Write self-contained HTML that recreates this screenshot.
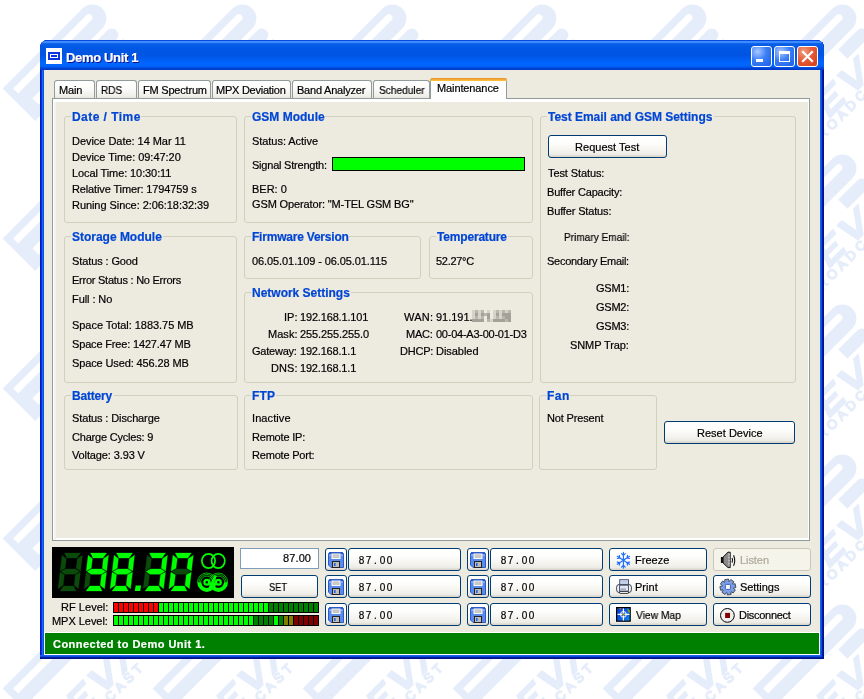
<!DOCTYPE html><html><head><meta charset="utf-8"><style>
html,body{margin:0;padding:0;}
body{width:864px;height:699px;position:relative;overflow:hidden;background:#fff;font-family:"Liberation Sans",sans-serif;}
.a,.t{position:absolute;}
.t{white-space:nowrap;line-height:20px;will-change:transform;-webkit-text-stroke:0.2px currentColor;}
.grp{position:absolute;border:1px solid #D0D0BF;border-radius:3px;box-sizing:border-box;}
.btn{position:absolute;box-sizing:border-box;border:1px solid #003C74;border-radius:3px;background:linear-gradient(180deg,#fff 0%,#fefefd 30%,#f4f3ee 70%,#ecebe6 88%,#d6d0c5 100%);}
.tab{position:absolute;box-sizing:border-box;border:1px solid #919B9C;border-bottom:none;border-radius:3px 3px 0 0;background:linear-gradient(180deg,#fff 0%,#fcfcfb 40%,#f0efea 85%,#e8e7e0 100%);}
svg{position:absolute;overflow:visible;}
</style></head><body>
<svg style="left:0;top:0" width="864" height="699"><defs><pattern id="wmp" x="0" y="0" width="150" height="150" patternUnits="userSpaceOnUse"><g transform="translate(-150,-150)"><g transform="translate(2.6,88.5) rotate(-45)" fill="#E6EDFA"><path fill-rule="evenodd" d="M0,0 H113 A14,14 0 0 1 113,28 H14 V37 H22 V46 H0 Z M7.5,7.5 V14.5 H14 V14.5 H111 A3.5,3.5 0 0 0 111,7.5 Z"/><rect x="7.5" y="27.5" width="6.5" height="9.5" /><path d="M88,33 H115 A6.5,6.5 0 0 1 115,46 H88 Z"/><g transform="translate(40,50) skewX(-15)"><rect x="0" y="0" width="24" height="6"/><rect x="0" y="10" width="20" height="5.5"/><rect x="0" y="20" width="24" height="6"/><rect x="0" y="0" width="6" height="26"/></g><g transform="translate(68,50) skewX(-15)"><path d="M0,0 h8 l8,18 l8,-18 h8 l-12,26 h-8 z"/></g><g transform="translate(100,50) skewX(-15)"><path d="M0,26 l12,-26 h8 l12,26 h-8 l-8,-18 l-8,18 z"/></g><text x="0" y="86" font-family="Liberation Sans" font-size="13" letter-spacing="4" fill="none" stroke="#E6EDFA" stroke-width="1.5">BROADCAST</text></g></g><g transform="translate(-150,0)"><g transform="translate(2.6,88.5) rotate(-45)" fill="#E6EDFA"><path fill-rule="evenodd" d="M0,0 H113 A14,14 0 0 1 113,28 H14 V37 H22 V46 H0 Z M7.5,7.5 V14.5 H14 V14.5 H111 A3.5,3.5 0 0 0 111,7.5 Z"/><rect x="7.5" y="27.5" width="6.5" height="9.5" /><path d="M88,33 H115 A6.5,6.5 0 0 1 115,46 H88 Z"/><g transform="translate(40,50) skewX(-15)"><rect x="0" y="0" width="24" height="6"/><rect x="0" y="10" width="20" height="5.5"/><rect x="0" y="20" width="24" height="6"/><rect x="0" y="0" width="6" height="26"/></g><g transform="translate(68,50) skewX(-15)"><path d="M0,0 h8 l8,18 l8,-18 h8 l-12,26 h-8 z"/></g><g transform="translate(100,50) skewX(-15)"><path d="M0,26 l12,-26 h8 l12,26 h-8 l-8,-18 l-8,18 z"/></g><text x="0" y="86" font-family="Liberation Sans" font-size="13" letter-spacing="4" fill="none" stroke="#E6EDFA" stroke-width="1.5">BROADCAST</text></g></g><g transform="translate(-150,150)"><g transform="translate(2.6,88.5) rotate(-45)" fill="#E6EDFA"><path fill-rule="evenodd" d="M0,0 H113 A14,14 0 0 1 113,28 H14 V37 H22 V46 H0 Z M7.5,7.5 V14.5 H14 V14.5 H111 A3.5,3.5 0 0 0 111,7.5 Z"/><rect x="7.5" y="27.5" width="6.5" height="9.5" /><path d="M88,33 H115 A6.5,6.5 0 0 1 115,46 H88 Z"/><g transform="translate(40,50) skewX(-15)"><rect x="0" y="0" width="24" height="6"/><rect x="0" y="10" width="20" height="5.5"/><rect x="0" y="20" width="24" height="6"/><rect x="0" y="0" width="6" height="26"/></g><g transform="translate(68,50) skewX(-15)"><path d="M0,0 h8 l8,18 l8,-18 h8 l-12,26 h-8 z"/></g><g transform="translate(100,50) skewX(-15)"><path d="M0,26 l12,-26 h8 l12,26 h-8 l-8,-18 l-8,18 z"/></g><text x="0" y="86" font-family="Liberation Sans" font-size="13" letter-spacing="4" fill="none" stroke="#E6EDFA" stroke-width="1.5">BROADCAST</text></g></g><g transform="translate(0,-150)"><g transform="translate(2.6,88.5) rotate(-45)" fill="#E6EDFA"><path fill-rule="evenodd" d="M0,0 H113 A14,14 0 0 1 113,28 H14 V37 H22 V46 H0 Z M7.5,7.5 V14.5 H14 V14.5 H111 A3.5,3.5 0 0 0 111,7.5 Z"/><rect x="7.5" y="27.5" width="6.5" height="9.5" /><path d="M88,33 H115 A6.5,6.5 0 0 1 115,46 H88 Z"/><g transform="translate(40,50) skewX(-15)"><rect x="0" y="0" width="24" height="6"/><rect x="0" y="10" width="20" height="5.5"/><rect x="0" y="20" width="24" height="6"/><rect x="0" y="0" width="6" height="26"/></g><g transform="translate(68,50) skewX(-15)"><path d="M0,0 h8 l8,18 l8,-18 h8 l-12,26 h-8 z"/></g><g transform="translate(100,50) skewX(-15)"><path d="M0,26 l12,-26 h8 l12,26 h-8 l-8,-18 l-8,18 z"/></g><text x="0" y="86" font-family="Liberation Sans" font-size="13" letter-spacing="4" fill="none" stroke="#E6EDFA" stroke-width="1.5">BROADCAST</text></g></g><g transform="translate(0,0)"><g transform="translate(2.6,88.5) rotate(-45)" fill="#E6EDFA"><path fill-rule="evenodd" d="M0,0 H113 A14,14 0 0 1 113,28 H14 V37 H22 V46 H0 Z M7.5,7.5 V14.5 H14 V14.5 H111 A3.5,3.5 0 0 0 111,7.5 Z"/><rect x="7.5" y="27.5" width="6.5" height="9.5" /><path d="M88,33 H115 A6.5,6.5 0 0 1 115,46 H88 Z"/><g transform="translate(40,50) skewX(-15)"><rect x="0" y="0" width="24" height="6"/><rect x="0" y="10" width="20" height="5.5"/><rect x="0" y="20" width="24" height="6"/><rect x="0" y="0" width="6" height="26"/></g><g transform="translate(68,50) skewX(-15)"><path d="M0,0 h8 l8,18 l8,-18 h8 l-12,26 h-8 z"/></g><g transform="translate(100,50) skewX(-15)"><path d="M0,26 l12,-26 h8 l12,26 h-8 l-8,-18 l-8,18 z"/></g><text x="0" y="86" font-family="Liberation Sans" font-size="13" letter-spacing="4" fill="none" stroke="#E6EDFA" stroke-width="1.5">BROADCAST</text></g></g><g transform="translate(0,150)"><g transform="translate(2.6,88.5) rotate(-45)" fill="#E6EDFA"><path fill-rule="evenodd" d="M0,0 H113 A14,14 0 0 1 113,28 H14 V37 H22 V46 H0 Z M7.5,7.5 V14.5 H14 V14.5 H111 A3.5,3.5 0 0 0 111,7.5 Z"/><rect x="7.5" y="27.5" width="6.5" height="9.5" /><path d="M88,33 H115 A6.5,6.5 0 0 1 115,46 H88 Z"/><g transform="translate(40,50) skewX(-15)"><rect x="0" y="0" width="24" height="6"/><rect x="0" y="10" width="20" height="5.5"/><rect x="0" y="20" width="24" height="6"/><rect x="0" y="0" width="6" height="26"/></g><g transform="translate(68,50) skewX(-15)"><path d="M0,0 h8 l8,18 l8,-18 h8 l-12,26 h-8 z"/></g><g transform="translate(100,50) skewX(-15)"><path d="M0,26 l12,-26 h8 l12,26 h-8 l-8,-18 l-8,18 z"/></g><text x="0" y="86" font-family="Liberation Sans" font-size="13" letter-spacing="4" fill="none" stroke="#E6EDFA" stroke-width="1.5">BROADCAST</text></g></g><g transform="translate(150,-150)"><g transform="translate(2.6,88.5) rotate(-45)" fill="#E6EDFA"><path fill-rule="evenodd" d="M0,0 H113 A14,14 0 0 1 113,28 H14 V37 H22 V46 H0 Z M7.5,7.5 V14.5 H14 V14.5 H111 A3.5,3.5 0 0 0 111,7.5 Z"/><rect x="7.5" y="27.5" width="6.5" height="9.5" /><path d="M88,33 H115 A6.5,6.5 0 0 1 115,46 H88 Z"/><g transform="translate(40,50) skewX(-15)"><rect x="0" y="0" width="24" height="6"/><rect x="0" y="10" width="20" height="5.5"/><rect x="0" y="20" width="24" height="6"/><rect x="0" y="0" width="6" height="26"/></g><g transform="translate(68,50) skewX(-15)"><path d="M0,0 h8 l8,18 l8,-18 h8 l-12,26 h-8 z"/></g><g transform="translate(100,50) skewX(-15)"><path d="M0,26 l12,-26 h8 l12,26 h-8 l-8,-18 l-8,18 z"/></g><text x="0" y="86" font-family="Liberation Sans" font-size="13" letter-spacing="4" fill="none" stroke="#E6EDFA" stroke-width="1.5">BROADCAST</text></g></g><g transform="translate(150,0)"><g transform="translate(2.6,88.5) rotate(-45)" fill="#E6EDFA"><path fill-rule="evenodd" d="M0,0 H113 A14,14 0 0 1 113,28 H14 V37 H22 V46 H0 Z M7.5,7.5 V14.5 H14 V14.5 H111 A3.5,3.5 0 0 0 111,7.5 Z"/><rect x="7.5" y="27.5" width="6.5" height="9.5" /><path d="M88,33 H115 A6.5,6.5 0 0 1 115,46 H88 Z"/><g transform="translate(40,50) skewX(-15)"><rect x="0" y="0" width="24" height="6"/><rect x="0" y="10" width="20" height="5.5"/><rect x="0" y="20" width="24" height="6"/><rect x="0" y="0" width="6" height="26"/></g><g transform="translate(68,50) skewX(-15)"><path d="M0,0 h8 l8,18 l8,-18 h8 l-12,26 h-8 z"/></g><g transform="translate(100,50) skewX(-15)"><path d="M0,26 l12,-26 h8 l12,26 h-8 l-8,-18 l-8,18 z"/></g><text x="0" y="86" font-family="Liberation Sans" font-size="13" letter-spacing="4" fill="none" stroke="#E6EDFA" stroke-width="1.5">BROADCAST</text></g></g><g transform="translate(150,150)"><g transform="translate(2.6,88.5) rotate(-45)" fill="#E6EDFA"><path fill-rule="evenodd" d="M0,0 H113 A14,14 0 0 1 113,28 H14 V37 H22 V46 H0 Z M7.5,7.5 V14.5 H14 V14.5 H111 A3.5,3.5 0 0 0 111,7.5 Z"/><rect x="7.5" y="27.5" width="6.5" height="9.5" /><path d="M88,33 H115 A6.5,6.5 0 0 1 115,46 H88 Z"/><g transform="translate(40,50) skewX(-15)"><rect x="0" y="0" width="24" height="6"/><rect x="0" y="10" width="20" height="5.5"/><rect x="0" y="20" width="24" height="6"/><rect x="0" y="0" width="6" height="26"/></g><g transform="translate(68,50) skewX(-15)"><path d="M0,0 h8 l8,18 l8,-18 h8 l-12,26 h-8 z"/></g><g transform="translate(100,50) skewX(-15)"><path d="M0,26 l12,-26 h8 l12,26 h-8 l-8,-18 l-8,18 z"/></g><text x="0" y="86" font-family="Liberation Sans" font-size="13" letter-spacing="4" fill="none" stroke="#E6EDFA" stroke-width="1.5">BROADCAST</text></g></g></pattern></defs><rect x="0" y="0" width="864" height="699" fill="url(#wmp)"/></svg>
<div class="a" style="left:40px;top:40px;width:784px;height:619px;background:#0855dd;border-radius:8px 8px 0 0;box-shadow:inset -1px -1px #00138c, inset -2px -2px #001ea0, inset -3px -3px #0b4be0, inset -4px -4px #1664ec, inset 1px 1px #0019cf, inset 2px 2px #0831d9, inset 3px 3px #166aee;"></div>
<div class="a" style="left:40px;top:40px;width:784px;height:30px;border-radius:8px 8px 0 0;background:linear-gradient(180deg,#0b4adf 0px,#0b4adf 1px,#3a8cff 1px,#3a8cff 3px,#1468f2 3px,#0a5ee8 4px,#0058e4 8px,#0054e2 15px,#005cf0 19px,#0066ff 23px,#0064fc 26px,#0058ee 27px,#0048d8 28px,#0036c6 30px);"></div>
<div class="a" style="left:44px;top:70px;width:776px;height:585px;background:#EDEAE0;"></div>
<div class="a" style="left:46px;top:48px;width:16px;height:16px;background:#fff;"></div>
<div class="a" style="left:48px;top:52px;width:12px;height:8px;background:#0a36e0;"></div>
<div class="a" style="left:50px;top:54px;width:8px;height:4px;background:#fff;"></div>
<div class="a" style="left:51px;top:55px;width:6px;height:2px;background:#0a36e0;"></div>
<div class="t" style="left:65.50px;top:47.50px;font-size:13px;color:#fff;font-weight:bold;letter-spacing:-0.335px;text-shadow:1px 1px #0f1089;">Demo Unit 1</div>
<div class="a" style="left:751px;top:46px;width:21px;height:21px;box-sizing:border-box;border:1px solid #fff;border-radius:3px;background:radial-gradient(circle at 30% 25%,#a9c8ff 0%,#3b7ff5 45%,#1c5ee8 100%);"></div>
<div class="a" style="left:774px;top:46px;width:21px;height:21px;box-sizing:border-box;border:1px solid #fff;border-radius:3px;background:radial-gradient(circle at 30% 25%,#a9c8ff 0%,#3b7ff5 45%,#1c5ee8 100%);"></div>
<div class="a" style="left:797px;top:46px;width:21px;height:21px;box-sizing:border-box;border:1px solid #fff;border-radius:3px;background:radial-gradient(circle at 30% 25%,#f0a080 0%,#e65b3a 45%,#d13c15 100%);"></div>
<div class="a" style="left:756px;top:59px;width:7px;height:3px;background:#fff;"></div>
<div class="a" style="left:779px;top:51px;width:11px;height:11px;box-sizing:border-box;border:1px solid #fff;border-top-width:3px;"></div>
<svg style="left:797px;top:46px" width="21" height="21"><path d="M6,6 L15,15 M15,6 L6,15" stroke="#fff" stroke-width="2.2" stroke-linecap="square"/></svg>
<div class="tab" style="left:54px;top:80px;width:41px;height:18px;"></div>
<div class="t" style="left:58.60px;top:80.19px;font-size:11px;color:#000;letter-spacing:-0.183px;">Main</div>
<div class="tab" style="left:96px;top:80px;width:41px;height:18px;"></div>
<div class="t" style="left:100.59px;top:80.19px;font-size:11px;color:#000;transform:scaleX(0.9057);transform-origin:0 0;">RDS</div>
<div class="tab" style="left:138px;top:80px;width:73px;height:18px;"></div>
<div class="t" style="left:142.50px;top:80.19px;font-size:11px;color:#000;letter-spacing:-0.205px;">FM Spectrum</div>
<div class="tab" style="left:212px;top:80px;width:79px;height:18px;"></div>
<div class="t" style="left:216.30px;top:80.19px;font-size:11px;color:#000;letter-spacing:-0.250px;">MPX Deviation</div>
<div class="tab" style="left:292px;top:80px;width:80px;height:18px;"></div>
<div class="t" style="left:297.00px;top:80.19px;font-size:11px;color:#000;letter-spacing:-0.217px;">Band Analyzer</div>
<div class="tab" style="left:373px;top:80px;width:57px;height:18px;"></div>
<div class="t" style="left:378.74px;top:80.19px;font-size:11px;color:#000;transform:scaleX(0.9224);transform-origin:0 0;">Scheduler</div>
<div class="a" style="left:52px;top:98px;width:758px;height:443px;box-sizing:border-box;border:1px solid #919B9C;background:#EDEAE0;box-shadow:inset 1px 3px #fff, inset 3px 0px #f4f3f0, inset -1px -2px #fff;"></div>
<div class="a" style="left:430px;top:78px;width:77px;height:21px;box-sizing:border-box;border:1px solid #919B9C;border-bottom:none;border-radius:3px 3px 0 0;background:#fff;"></div>
<div class="a" style="left:430px;top:78px;width:77px;height:3px;border-radius:3px 3px 0 0;background:linear-gradient(180deg,#e68b2c,#ffc73c);"></div>
<div class="t" style="left:436.70px;top:78.19px;font-size:11px;color:#000;letter-spacing:-0.110px;">Maintenance</div>
<div class="grp" style="left:64px;top:116px;width:173px;height:107px;"></div>
<div class="a" style="left:71.2px;top:114px;width:70.3px;height:5px;background:#EDEAE0;"></div>
<div class="t" style="left:71.95px;top:106.84px;font-size:12px;color:#0046D5;font-weight:bold;letter-spacing:0.455px;">Date / Time</div>
<div class="t" style="left:71.70px;top:131.19px;font-size:11px;color:#000;letter-spacing:-0.036px;">Device Date: 14 Mar 11</div>
<div class="t" style="left:71.70px;top:147.19px;font-size:11px;color:#000;letter-spacing:-0.033px;">Device Time: 09:47:20</div>
<div class="t" style="left:71.70px;top:163.19px;font-size:11px;color:#000;letter-spacing:-0.100px;">Local Time: 10:30:11</div>
<div class="t" style="left:71.70px;top:179.19px;font-size:11px;color:#000;letter-spacing:-0.129px;">Relative Timer: 1794759 s</div>
<div class="t" style="left:71.70px;top:195.19px;font-size:11px;color:#000;letter-spacing:-0.063px;">Runing Since: 2:06:18:32:39</div>
<div class="grp" style="left:244px;top:116px;width:289px;height:107px;"></div>
<div class="a" style="left:250.7px;top:114px;width:74.8px;height:5px;background:#EDEAE0;"></div>
<div class="t" style="left:251.70px;top:106.84px;font-size:12px;color:#0046D5;font-weight:bold;letter-spacing:0.006px;">GSM Module</div>
<div class="t" style="left:252.10px;top:131.19px;font-size:11px;color:#000;letter-spacing:-0.050px;">Status: Active</div>
<div class="t" style="left:252.10px;top:155.19px;font-size:11px;color:#000;letter-spacing:-0.217px;">Signal Strength:</div>
<div class="a" style="left:332px;top:157px;width:193px;height:14px;box-sizing:border-box;border:1px solid #000;background:#00ff00;"></div>
<div class="t" style="left:251.60px;top:179.19px;font-size:11px;color:#000;">BER: 0</div>
<div class="t" style="left:252.10px;top:194.19px;font-size:11px;color:#000;letter-spacing:-0.130px;">GSM Operator: "M-TEL GSM BG"</div>
<div class="grp" style="left:540px;top:116px;width:256px;height:267px;"></div>
<div class="a" style="left:546.8px;top:114px;width:167px;height:5px;background:#EDEAE0;"></div>
<div class="t" style="left:548.30px;top:106.84px;font-size:12px;color:#0046D5;font-weight:bold;letter-spacing:-0.029px;">Test Email and GSM Settings</div>
<div class="btn" style="left:548px;top:135px;width:119px;height:23px;"></div>
<div class="t" style="left:574.80px;top:137.19px;font-size:11px;color:#000;letter-spacing:0.032px;">Request Test</div>
<div class="t" style="left:547.65px;top:163.19px;font-size:11px;color:#000;letter-spacing:-0.095px;">Test Status:</div>
<div class="t" style="left:546.90px;top:182.19px;font-size:11px;color:#000;letter-spacing:-0.180px;">Buffer Capacity:</div>
<div class="t" style="left:546.90px;top:200.69px;font-size:11px;color:#000;letter-spacing:-0.154px;">Buffer Status:</div>
<div class="t" style="left:563.78px;top:226.69px;font-size:11px;color:#000;transform:scaleX(0.9165);transform-origin:0 0;">Primary Email:</div>
<div class="t" style="left:547.20px;top:250.69px;font-size:11px;color:#000;letter-spacing:-0.270px;">Secondary Email:</div>
<div class="t" style="left:596.10px;top:277.69px;font-size:11px;color:#000;letter-spacing:-0.237px;">GSM1:</div>
<div class="t" style="left:596.10px;top:296.69px;font-size:11px;color:#000;letter-spacing:-0.237px;">GSM2:</div>
<div class="t" style="left:596.10px;top:315.69px;font-size:11px;color:#000;letter-spacing:-0.237px;">GSM3:</div>
<div class="t" style="left:570.00px;top:334.69px;font-size:11px;color:#000;letter-spacing:-0.094px;">SNMP Trap:</div>
<div class="grp" style="left:64px;top:236px;width:173px;height:147px;"></div>
<div class="a" style="left:71.0px;top:234px;width:91.8px;height:5px;background:#EDEAE0;"></div>
<div class="t" style="left:72.00px;top:226.84px;font-size:12px;color:#0046D5;font-weight:bold;letter-spacing:-0.015px;">Storage Module</div>
<div class="t" style="left:72.00px;top:251.19px;font-size:11px;color:#000;letter-spacing:-0.108px;">Status : Good</div>
<div class="t" style="left:71.50px;top:270.19px;font-size:11px;color:#000;letter-spacing:-0.248px;">Error Status : No Errors</div>
<div class="t" style="left:71.50px;top:289.19px;font-size:11px;color:#000;letter-spacing:-0.075px;">Full : No</div>
<div class="t" style="left:72.00px;top:315.19px;font-size:11px;color:#000;letter-spacing:-0.048px;">Space Total: 1883.75 MB</div>
<div class="t" style="left:72.00px;top:334.19px;font-size:11px;color:#000;letter-spacing:-0.164px;">Space Free: 1427.47 MB</div>
<div class="t" style="left:72.00px;top:352.69px;font-size:11px;color:#000;letter-spacing:-0.123px;">Space Used: 456.28 MB</div>
<div class="grp" style="left:244px;top:236px;width:177px;height:43px;"></div>
<div class="a" style="left:251.2px;top:234px;width:98.3px;height:5px;background:#EDEAE0;"></div>
<div class="t" style="left:251.95px;top:226.84px;font-size:12px;color:#0046D5;font-weight:bold;letter-spacing:-0.213px;">Firmware Version</div>
<div class="t" style="left:252.20px;top:251.19px;font-size:11px;color:#000;letter-spacing:-0.085px;">06.05.01.109 - 06.05.01.115</div>
<div class="grp" style="left:429px;top:236px;width:104px;height:43px;"></div>
<div class="a" style="left:435.5px;top:234px;width:72.7px;height:5px;background:#EDEAE0;"></div>
<div class="t" style="left:437.00px;top:226.84px;font-size:12px;color:#0046D5;font-weight:bold;letter-spacing:-0.180px;">Temperature</div>
<div class="t" style="left:435.90px;top:251.19px;font-size:11px;color:#000;letter-spacing:-0.300px;">52.27°C</div>
<div class="grp" style="left:244px;top:292px;width:289px;height:91px;"></div>
<div class="a" style="left:251.3px;top:290px;width:99.6px;height:5px;background:#EDEAE0;"></div>
<div class="t" style="left:252.05px;top:282.84px;font-size:12px;color:#0046D5;font-weight:bold;letter-spacing:-0.010px;">Network Settings</div>
<div class="t" style="left:283.60px;top:307.19px;font-size:11px;color:#000;letter-spacing:0.050px;">IP:</div>
<div class="t" style="left:300.15px;top:307.19px;font-size:11px;color:#000;letter-spacing:-0.167px;">192.168.1.101</div>
<div class="t" style="left:267.80px;top:323.69px;font-size:11px;color:#000;letter-spacing:0.037px;">Mask:</div>
<div class="t" style="left:300.40px;top:323.69px;font-size:11px;color:#000;letter-spacing:-0.108px;">255.255.255.0</div>
<div class="t" style="left:252.30px;top:340.69px;font-size:11px;color:#000;letter-spacing:-0.229px;">Gateway:</div>
<div class="t" style="left:300.15px;top:340.69px;font-size:11px;color:#000;letter-spacing:-0.185px;">192.168.1.1</div>
<div class="t" style="left:270.60px;top:357.69px;font-size:11px;color:#000;letter-spacing:0.117px;">DNS:</div>
<div class="t" style="left:300.15px;top:357.69px;font-size:11px;color:#000;letter-spacing:-0.185px;">192.168.1.1</div>
<div class="t" style="left:404.20px;top:307.19px;font-size:11px;color:#000;letter-spacing:0.250px;">WAN:</div>
<div class="t" style="left:436.00px;top:307.19px;font-size:11px;color:#000;letter-spacing:-0.025px;">91.191.</div>
<div class="t" style="left:406.40px;top:324.19px;font-size:11px;color:#000;letter-spacing:-0.233px;">MAC:</div>
<div class="t" style="left:436.00px;top:324.19px;font-size:11px;color:#000;letter-spacing:-0.247px;">00-04-A3-00-01-D3</div>
<div class="t" style="left:399.80px;top:340.69px;font-size:11px;color:#000;letter-spacing:-0.213px;">DHCP:</div>
<div class="t" style="left:435.50px;top:340.69px;font-size:11px;color:#000;letter-spacing:-0.043px;">Disabled</div>
<div class="a" style="left:472px;top:310px;width:3px;height:3px;background:#D6D4C9;"></div><div class="a" style="left:475px;top:310px;width:3px;height:3px;background:#BAB8AE;"></div><div class="a" style="left:478px;top:310px;width:3px;height:3px;background:#D6D4C9;"></div><div class="a" style="left:481px;top:310px;width:3px;height:3px;background:#BAB8AE;"></div><div class="a" style="left:487px;top:310px;width:3px;height:3px;background:#D6D4C9;"></div><div class="a" style="left:493px;top:310px;width:3px;height:3px;background:#D6D4C9;"></div><div class="a" style="left:496px;top:310px;width:3px;height:3px;background:#BAB8AE;"></div><div class="a" style="left:499px;top:310px;width:3px;height:3px;background:#D6D4C9;"></div><div class="a" style="left:502px;top:310px;width:3px;height:3px;background:#BAB8AE;"></div><div class="a" style="left:505px;top:310px;width:3px;height:3px;background:#D6D4C9;"></div><div class="a" style="left:508px;top:310px;width:3px;height:3px;background:#BAB8AE;"></div><div class="a" style="left:472px;top:313px;width:3px;height:3px;background:#D6D4C9;"></div><div class="a" style="left:475px;top:313px;width:3px;height:3px;background:#A3A198;"></div><div class="a" style="left:478px;top:313px;width:3px;height:3px;background:#D6D4C9;"></div><div class="a" style="left:481px;top:313px;width:3px;height:3px;background:#A3A198;"></div><div class="a" style="left:484px;top:313px;width:3px;height:3px;background:#BAB8AE;"></div><div class="a" style="left:487px;top:313px;width:3px;height:3px;background:#A3A198;"></div><div class="a" style="left:493px;top:313px;width:3px;height:3px;background:#D6D4C9;"></div><div class="a" style="left:496px;top:313px;width:3px;height:3px;background:#A3A198;"></div><div class="a" style="left:499px;top:313px;width:3px;height:3px;background:#D6D4C9;"></div><div class="a" style="left:502px;top:313px;width:3px;height:3px;background:#A3A198;"></div><div class="a" style="left:505px;top:313px;width:3px;height:3px;background:#A3A198;"></div><div class="a" style="left:508px;top:313px;width:3px;height:3px;background:#A3A198;"></div><div class="a" style="left:472px;top:316px;width:3px;height:3px;background:#D6D4C9;"></div><div class="a" style="left:475px;top:316px;width:3px;height:3px;background:#BAB8AE;"></div><div class="a" style="left:478px;top:316px;width:3px;height:3px;background:#D6D4C9;"></div><div class="a" style="left:481px;top:316px;width:3px;height:3px;background:#BAB8AE;"></div><div class="a" style="left:487px;top:316px;width:3px;height:3px;background:#A3A198;"></div><div class="a" style="left:493px;top:316px;width:3px;height:3px;background:#D6D4C9;"></div><div class="a" style="left:496px;top:316px;width:3px;height:3px;background:#BAB8AE;"></div><div class="a" style="left:499px;top:316px;width:3px;height:3px;background:#D6D4C9;"></div><div class="a" style="left:502px;top:316px;width:3px;height:3px;background:#BAB8AE;"></div><div class="a" style="left:505px;top:316px;width:3px;height:3px;background:#A3A198;"></div><div class="a" style="left:508px;top:316px;width:3px;height:3px;background:#A3A198;"></div><div class="a" style="left:472px;top:319px;width:3px;height:3px;background:#A3A198;"></div><div class="a" style="left:475px;top:319px;width:3px;height:3px;background:#A3A198;"></div><div class="a" style="left:478px;top:319px;width:3px;height:3px;background:#A3A198;"></div><div class="a" style="left:481px;top:319px;width:3px;height:3px;background:#A3A198;"></div><div class="a" style="left:487px;top:319px;width:3px;height:3px;background:#BAB8AE;"></div><div class="a" style="left:490px;top:319px;width:3px;height:3px;background:#D6D4C9;"></div><div class="a" style="left:493px;top:319px;width:3px;height:3px;background:#A3A198;"></div><div class="a" style="left:496px;top:319px;width:3px;height:3px;background:#A3A198;"></div><div class="a" style="left:499px;top:319px;width:3px;height:3px;background:#A3A198;"></div><div class="a" style="left:502px;top:319px;width:3px;height:3px;background:#A3A198;"></div><div class="a" style="left:505px;top:319px;width:3px;height:3px;background:#BAB8AE;"></div><div class="a" style="left:508px;top:319px;width:3px;height:3px;background:#A3A198;"></div>
<div class="grp" style="left:64px;top:395px;width:174px;height:75px;"></div>
<div class="a" style="left:71.4px;top:393px;width:42.4px;height:5px;background:#EDEAE0;"></div>
<div class="t" style="left:72.15px;top:385.84px;font-size:12px;color:#0046D5;font-weight:bold;letter-spacing:-0.183px;">Battery</div>
<div class="t" style="left:71.75px;top:407.89px;font-size:11px;color:#000;letter-spacing:-0.124px;">Status : Discharge</div>
<div class="t" style="left:71.75px;top:426.99px;font-size:11px;color:#000;letter-spacing:-0.197px;">Charge Cycles: 9</div>
<div class="t" style="left:72.25px;top:445.39px;font-size:11px;color:#000;letter-spacing:-0.121px;">Voltage: 3.93 V</div>
<div class="grp" style="left:244px;top:395px;width:289px;height:75px;"></div>
<div class="a" style="left:251.4px;top:393px;width:24.9px;height:5px;background:#EDEAE0;"></div>
<div class="t" style="left:252.15px;top:385.84px;font-size:12px;color:#0046D5;font-weight:bold;letter-spacing:0.200px;">FTP</div>
<div class="t" style="left:251.90px;top:407.89px;font-size:11px;color:#000;letter-spacing:0.086px;">Inactive</div>
<div class="t" style="left:251.90px;top:426.99px;font-size:11px;color:#000;letter-spacing:-0.200px;">Remote IP:</div>
<div class="t" style="left:251.90px;top:445.39px;font-size:11px;color:#000;letter-spacing:-0.195px;">Remote Port:</div>
<div class="grp" style="left:539px;top:395px;width:118px;height:75px;"></div>
<div class="a" style="left:546.3px;top:393px;width:23.8px;height:5px;background:#EDEAE0;"></div>
<div class="t" style="left:547.05px;top:385.84px;font-size:12px;color:#0046D5;font-weight:bold;letter-spacing:0.525px;">Fan</div>
<div class="t" style="left:546.80px;top:407.89px;font-size:11px;color:#000;letter-spacing:-0.150px;">Not Present</div>
<div class="btn" style="left:664px;top:421px;width:131px;height:23px;"></div>
<div class="t" style="left:696.80px;top:423.19px;font-size:11px;color:#000;letter-spacing:0.018px;">Reset Device</div>
<div class="a" style="left:52px;top:547px;width:182px;height:51px;background:#000;"></div><svg style="left:0;top:0" width="864" height="699"><polygon points="64.43,553.00 80.53,553.00 76.83,558.10 66.93,558.10" fill="#0b4a0b" stroke="#0b4a0b" stroke-width="0.3" stroke-linejoin="round"/><polygon points="63.65,585.90 73.55,585.90 76.05,591.00 59.95,591.00" fill="#0b4a0b" stroke="#0b4a0b" stroke-width="0.3" stroke-linejoin="round"/><polygon points="60.94,571.60 65.66,568.90 75.56,568.90 79.64,571.60 74.92,574.30 65.02,574.30" fill="#0b4a0b" stroke="#0b4a0b" stroke-width="0.3" stroke-linejoin="round"/><polygon points="62.03,555.15 66.32,558.65 65.17,568.35 60.15,571.05" fill="#0b4a0b" stroke="#0b4a0b" stroke-width="0.3" stroke-linejoin="round"/><polygon points="82.43,555.15 80.55,571.05 76.17,568.35 77.32,558.65" fill="#0b4a0b" stroke="#0b4a0b" stroke-width="0.3" stroke-linejoin="round"/><polygon points="60.02,572.15 64.41,574.85 63.17,585.35 58.05,588.85" fill="#0b4a0b" stroke="#0b4a0b" stroke-width="0.3" stroke-linejoin="round"/><polygon points="80.42,572.15 78.45,588.85 74.17,585.35 75.41,574.85" fill="#0b4a0b" stroke="#0b4a0b" stroke-width="0.3" stroke-linejoin="round"/><polygon points="90.53,553.00 106.63,553.00 102.93,558.10 93.03,558.10" fill="#00ff00" stroke="#00ff00" stroke-width="0.3" stroke-linejoin="round"/><polygon points="89.75,585.90 99.65,585.90 102.15,591.00 86.05,591.00" fill="#00ff00" stroke="#00ff00" stroke-width="0.3" stroke-linejoin="round"/><polygon points="87.04,571.60 91.76,568.90 101.66,568.90 105.74,571.60 101.02,574.30 91.12,574.30" fill="#00ff00" stroke="#00ff00" stroke-width="0.3" stroke-linejoin="round"/><polygon points="88.13,555.15 92.42,558.65 91.27,568.35 86.25,571.05" fill="#00ff00" stroke="#00ff00" stroke-width="0.3" stroke-linejoin="round"/><polygon points="108.53,555.15 106.65,571.05 102.27,568.35 103.42,558.65" fill="#00ff00" stroke="#00ff00" stroke-width="0.3" stroke-linejoin="round"/><polygon points="86.12,572.15 90.51,574.85 89.27,585.35 84.15,588.85" fill="#0b4a0b" stroke="#0b4a0b" stroke-width="0.3" stroke-linejoin="round"/><polygon points="106.52,572.15 104.55,588.85 100.27,585.35 101.51,574.85" fill="#00ff00" stroke="#00ff00" stroke-width="0.3" stroke-linejoin="round"/><polygon points="116.53,553.00 132.63,553.00 128.93,558.10 119.03,558.10" fill="#00ff00" stroke="#00ff00" stroke-width="0.3" stroke-linejoin="round"/><polygon points="115.75,585.90 125.65,585.90 128.15,591.00 112.05,591.00" fill="#00ff00" stroke="#00ff00" stroke-width="0.3" stroke-linejoin="round"/><polygon points="113.04,571.60 117.76,568.90 127.66,568.90 131.74,571.60 127.02,574.30 117.12,574.30" fill="#00ff00" stroke="#00ff00" stroke-width="0.3" stroke-linejoin="round"/><polygon points="114.13,555.15 118.42,558.65 117.27,568.35 112.25,571.05" fill="#00ff00" stroke="#00ff00" stroke-width="0.3" stroke-linejoin="round"/><polygon points="134.53,555.15 132.65,571.05 128.27,568.35 129.42,558.65" fill="#00ff00" stroke="#00ff00" stroke-width="0.3" stroke-linejoin="round"/><polygon points="112.12,572.15 116.51,574.85 115.27,585.35 110.15,588.85" fill="#00ff00" stroke="#00ff00" stroke-width="0.3" stroke-linejoin="round"/><polygon points="132.52,572.15 130.55,588.85 126.27,585.35 127.51,574.85" fill="#00ff00" stroke="#00ff00" stroke-width="0.3" stroke-linejoin="round"/><polygon points="135.6,585.5 141,585.5 140.3,591 134.9,591" fill="#00ff00"/><polygon points="149.53,553.00 165.63,553.00 161.93,558.10 152.03,558.10" fill="#00ff00" stroke="#00ff00" stroke-width="0.3" stroke-linejoin="round"/><polygon points="148.75,585.90 158.65,585.90 161.15,591.00 145.05,591.00" fill="#00ff00" stroke="#00ff00" stroke-width="0.3" stroke-linejoin="round"/><polygon points="146.04,571.60 150.76,568.90 160.66,568.90 164.74,571.60 160.02,574.30 150.12,574.30" fill="#00ff00" stroke="#00ff00" stroke-width="0.3" stroke-linejoin="round"/><polygon points="147.13,555.15 151.42,558.65 150.27,568.35 145.25,571.05" fill="#0b4a0b" stroke="#0b4a0b" stroke-width="0.3" stroke-linejoin="round"/><polygon points="167.53,555.15 165.65,571.05 161.27,568.35 162.42,558.65" fill="#00ff00" stroke="#00ff00" stroke-width="0.3" stroke-linejoin="round"/><polygon points="145.12,572.15 149.51,574.85 148.27,585.35 143.15,588.85" fill="#0b4a0b" stroke="#0b4a0b" stroke-width="0.3" stroke-linejoin="round"/><polygon points="165.52,572.15 163.55,588.85 159.27,585.35 160.51,574.85" fill="#00ff00" stroke="#00ff00" stroke-width="0.3" stroke-linejoin="round"/><polygon points="175.33,553.00 191.43,553.00 187.73,558.10 177.83,558.10" fill="#00ff00" stroke="#00ff00" stroke-width="0.3" stroke-linejoin="round"/><polygon points="174.55,585.90 184.45,585.90 186.95,591.00 170.85,591.00" fill="#00ff00" stroke="#00ff00" stroke-width="0.3" stroke-linejoin="round"/><polygon points="171.84,571.60 176.56,568.90 186.46,568.90 190.54,571.60 185.82,574.30 175.92,574.30" fill="#0b4a0b" stroke="#0b4a0b" stroke-width="0.3" stroke-linejoin="round"/><polygon points="172.93,555.15 177.22,558.65 176.07,568.35 171.05,571.05" fill="#00ff00" stroke="#00ff00" stroke-width="0.3" stroke-linejoin="round"/><polygon points="193.33,555.15 191.45,571.05 187.07,568.35 188.22,558.65" fill="#00ff00" stroke="#00ff00" stroke-width="0.3" stroke-linejoin="round"/><polygon points="170.92,572.15 175.31,574.85 174.07,585.35 168.95,588.85" fill="#00ff00" stroke="#00ff00" stroke-width="0.3" stroke-linejoin="round"/><polygon points="191.32,572.15 189.35,588.85 185.07,585.35 186.31,574.85" fill="#00ff00" stroke="#00ff00" stroke-width="0.3" stroke-linejoin="round"/><ellipse cx="208.5" cy="561" rx="6.6" ry="7.2" fill="none" stroke="#00ff00" stroke-width="1.7"/><ellipse cx="218.2" cy="561" rx="6.6" ry="7.2" fill="none" stroke="#00ff00" stroke-width="1.7"/><path d="M199.20000000000002,582.3 A7.6,7.6 0 0 0 214.4,582.3" fill="none" stroke="#00ff00" stroke-width="4"/><path d="M200.60000000000002,582.3 A6.2,6.2 0 0 1 213.0,582.3" fill="none" stroke="#00ff00" stroke-width="0.7"/><path d="M199.0,582.3 A7.8,7.8 0 0 1 214.60000000000002,582.3" fill="none" stroke="#00ff00" stroke-width="0.7"/><path d="M197.5,582.3 A9.3,9.3 0 0 1 216.10000000000002,582.3" fill="none" stroke="#00ff00" stroke-width="0.7"/><circle cx="206.8" cy="582.3" r="2.4" fill="none" stroke="#00ff00" stroke-width="2.2"/><path d="M210.8,582.3 A7.6,7.6 0 0 0 226.0,582.3" fill="none" stroke="#00ff00" stroke-width="4"/><path d="M212.20000000000002,582.3 A6.2,6.2 0 0 1 224.6,582.3" fill="none" stroke="#00ff00" stroke-width="0.7"/><path d="M210.6,582.3 A7.8,7.8 0 0 1 226.20000000000002,582.3" fill="none" stroke="#00ff00" stroke-width="0.7"/><path d="M209.1,582.3 A9.3,9.3 0 0 1 227.70000000000002,582.3" fill="none" stroke="#00ff00" stroke-width="0.7"/><circle cx="218.4" cy="582.3" r="2.4" fill="none" stroke="#00ff00" stroke-width="2.2"/><path d="M209.5,589 Q212.6,582 215.7,575.5" fill="none" stroke="#00ff00" stroke-width="2.6"/></svg>
<div class="a" style="left:240px;top:548px;width:79px;height:21px;box-sizing:border-box;border:1px solid #7F9DB9;background:#fff;"></div>
<div class="t" style="left:283.40px;top:547.69px;font-size:11px;color:#000;letter-spacing:0.112px;">87.00</div>
<div class="btn" style="left:241px;top:575px;width:77px;height:23px;"></div>
<div class="t" style="left:269.28px;top:576.79px;font-size:11px;color:#000;transform:scaleX(0.8386);transform-origin:0 0;">SET</div>
<div class="btn" style="left:325px;top:548px;width:22px;height:23px;"></div>
<svg style="left:328px;top:552px" width="16" height="16"><path d="M0.5,1.5 H15.5 V15.5 H3 L0.5,13 Z" fill="#5A8BEA" stroke="#2E5BC6" stroke-width="1"/><rect x="1" y="0" width="14" height="1.4" fill="#2E5BC6"/><rect x="3.5" y="1.5" width="9" height="5.5" fill="#fff"/><rect x="4.5" y="2.3" width="7" height="3.8" fill="#C8C8C8"/><rect x="4" y="9" width="8" height="7" fill="#222"/><rect x="5" y="10" width="6" height="5" fill="#BDBDBD"/><rect x="6" y="11" width="1.6" height="3" fill="#2A5FE0"/><rect x="1.6" y="2.6" width="1" height="1" fill="#fff"/><rect x="13.4" y="2.6" width="1" height="1" fill="#fff"/></svg>
<div class="btn" style="left:348px;top:548px;width:113px;height:23px;"></div>
<div class="t" style="left:358.00px;top:551.10px;width:7px;text-align:center;font-size:10px;">8</div>
<div class="t" style="left:365.00px;top:551.10px;width:7px;text-align:center;font-size:10px;">7</div>
<div class="t" style="left:372.00px;top:551.10px;width:7px;text-align:center;font-size:10px;">.</div>
<div class="t" style="left:379.00px;top:551.10px;width:7px;text-align:center;font-size:10px;">0</div>
<div class="t" style="left:386.00px;top:551.10px;width:7px;text-align:center;font-size:10px;">0</div>
<div class="btn" style="left:467px;top:548px;width:22px;height:23px;"></div>
<svg style="left:470px;top:552px" width="16" height="16"><path d="M0.5,1.5 H15.5 V15.5 H3 L0.5,13 Z" fill="#5A8BEA" stroke="#2E5BC6" stroke-width="1"/><rect x="1" y="0" width="14" height="1.4" fill="#2E5BC6"/><rect x="3.5" y="1.5" width="9" height="5.5" fill="#fff"/><rect x="4.5" y="2.3" width="7" height="3.8" fill="#C8C8C8"/><rect x="4" y="9" width="8" height="7" fill="#222"/><rect x="5" y="10" width="6" height="5" fill="#BDBDBD"/><rect x="6" y="11" width="1.6" height="3" fill="#2A5FE0"/><rect x="1.6" y="2.6" width="1" height="1" fill="#fff"/><rect x="13.4" y="2.6" width="1" height="1" fill="#fff"/></svg>
<div class="btn" style="left:490px;top:548px;width:113px;height:23px;"></div>
<div class="t" style="left:499.90px;top:551.10px;width:7px;text-align:center;font-size:10px;">8</div>
<div class="t" style="left:506.90px;top:551.10px;width:7px;text-align:center;font-size:10px;">7</div>
<div class="t" style="left:513.90px;top:551.10px;width:7px;text-align:center;font-size:10px;">.</div>
<div class="t" style="left:520.90px;top:551.10px;width:7px;text-align:center;font-size:10px;">0</div>
<div class="t" style="left:527.90px;top:551.10px;width:7px;text-align:center;font-size:10px;">0</div>
<div class="btn" style="left:325px;top:575px;width:22px;height:23px;"></div>
<svg style="left:328px;top:579px" width="16" height="16"><path d="M0.5,1.5 H15.5 V15.5 H3 L0.5,13 Z" fill="#5A8BEA" stroke="#2E5BC6" stroke-width="1"/><rect x="1" y="0" width="14" height="1.4" fill="#2E5BC6"/><rect x="3.5" y="1.5" width="9" height="5.5" fill="#fff"/><rect x="4.5" y="2.3" width="7" height="3.8" fill="#C8C8C8"/><rect x="4" y="9" width="8" height="7" fill="#222"/><rect x="5" y="10" width="6" height="5" fill="#BDBDBD"/><rect x="6" y="11" width="1.6" height="3" fill="#2A5FE0"/><rect x="1.6" y="2.6" width="1" height="1" fill="#fff"/><rect x="13.4" y="2.6" width="1" height="1" fill="#fff"/></svg>
<div class="btn" style="left:348px;top:575px;width:113px;height:23px;"></div>
<div class="t" style="left:358.00px;top:578.10px;width:7px;text-align:center;font-size:10px;">8</div>
<div class="t" style="left:365.00px;top:578.10px;width:7px;text-align:center;font-size:10px;">7</div>
<div class="t" style="left:372.00px;top:578.10px;width:7px;text-align:center;font-size:10px;">.</div>
<div class="t" style="left:379.00px;top:578.10px;width:7px;text-align:center;font-size:10px;">0</div>
<div class="t" style="left:386.00px;top:578.10px;width:7px;text-align:center;font-size:10px;">0</div>
<div class="btn" style="left:467px;top:575px;width:22px;height:23px;"></div>
<svg style="left:470px;top:579px" width="16" height="16"><path d="M0.5,1.5 H15.5 V15.5 H3 L0.5,13 Z" fill="#5A8BEA" stroke="#2E5BC6" stroke-width="1"/><rect x="1" y="0" width="14" height="1.4" fill="#2E5BC6"/><rect x="3.5" y="1.5" width="9" height="5.5" fill="#fff"/><rect x="4.5" y="2.3" width="7" height="3.8" fill="#C8C8C8"/><rect x="4" y="9" width="8" height="7" fill="#222"/><rect x="5" y="10" width="6" height="5" fill="#BDBDBD"/><rect x="6" y="11" width="1.6" height="3" fill="#2A5FE0"/><rect x="1.6" y="2.6" width="1" height="1" fill="#fff"/><rect x="13.4" y="2.6" width="1" height="1" fill="#fff"/></svg>
<div class="btn" style="left:490px;top:575px;width:113px;height:23px;"></div>
<div class="t" style="left:499.90px;top:578.10px;width:7px;text-align:center;font-size:10px;">8</div>
<div class="t" style="left:506.90px;top:578.10px;width:7px;text-align:center;font-size:10px;">7</div>
<div class="t" style="left:513.90px;top:578.10px;width:7px;text-align:center;font-size:10px;">.</div>
<div class="t" style="left:520.90px;top:578.10px;width:7px;text-align:center;font-size:10px;">0</div>
<div class="t" style="left:527.90px;top:578.10px;width:7px;text-align:center;font-size:10px;">0</div>
<div class="btn" style="left:325px;top:603px;width:22px;height:23px;"></div>
<svg style="left:328px;top:607px" width="16" height="16"><path d="M0.5,1.5 H15.5 V15.5 H3 L0.5,13 Z" fill="#5A8BEA" stroke="#2E5BC6" stroke-width="1"/><rect x="1" y="0" width="14" height="1.4" fill="#2E5BC6"/><rect x="3.5" y="1.5" width="9" height="5.5" fill="#fff"/><rect x="4.5" y="2.3" width="7" height="3.8" fill="#C8C8C8"/><rect x="4" y="9" width="8" height="7" fill="#222"/><rect x="5" y="10" width="6" height="5" fill="#BDBDBD"/><rect x="6" y="11" width="1.6" height="3" fill="#2A5FE0"/><rect x="1.6" y="2.6" width="1" height="1" fill="#fff"/><rect x="13.4" y="2.6" width="1" height="1" fill="#fff"/></svg>
<div class="btn" style="left:348px;top:603px;width:113px;height:23px;"></div>
<div class="t" style="left:358.00px;top:606.10px;width:7px;text-align:center;font-size:10px;">8</div>
<div class="t" style="left:365.00px;top:606.10px;width:7px;text-align:center;font-size:10px;">7</div>
<div class="t" style="left:372.00px;top:606.10px;width:7px;text-align:center;font-size:10px;">.</div>
<div class="t" style="left:379.00px;top:606.10px;width:7px;text-align:center;font-size:10px;">0</div>
<div class="t" style="left:386.00px;top:606.10px;width:7px;text-align:center;font-size:10px;">0</div>
<div class="btn" style="left:467px;top:603px;width:22px;height:23px;"></div>
<svg style="left:470px;top:607px" width="16" height="16"><path d="M0.5,1.5 H15.5 V15.5 H3 L0.5,13 Z" fill="#5A8BEA" stroke="#2E5BC6" stroke-width="1"/><rect x="1" y="0" width="14" height="1.4" fill="#2E5BC6"/><rect x="3.5" y="1.5" width="9" height="5.5" fill="#fff"/><rect x="4.5" y="2.3" width="7" height="3.8" fill="#C8C8C8"/><rect x="4" y="9" width="8" height="7" fill="#222"/><rect x="5" y="10" width="6" height="5" fill="#BDBDBD"/><rect x="6" y="11" width="1.6" height="3" fill="#2A5FE0"/><rect x="1.6" y="2.6" width="1" height="1" fill="#fff"/><rect x="13.4" y="2.6" width="1" height="1" fill="#fff"/></svg>
<div class="btn" style="left:490px;top:603px;width:113px;height:23px;"></div>
<div class="t" style="left:499.90px;top:606.10px;width:7px;text-align:center;font-size:10px;">8</div>
<div class="t" style="left:506.90px;top:606.10px;width:7px;text-align:center;font-size:10px;">7</div>
<div class="t" style="left:513.90px;top:606.10px;width:7px;text-align:center;font-size:10px;">.</div>
<div class="t" style="left:520.90px;top:606.10px;width:7px;text-align:center;font-size:10px;">0</div>
<div class="t" style="left:527.90px;top:606.10px;width:7px;text-align:center;font-size:10px;">0</div>
<div class="btn" style="left:609px;top:548px;width:98px;height:23px;"></div>
<div class="t" style="left:635.40px;top:550.19px;font-size:11px;color:#000;letter-spacing:0.030px;">Freeze</div>
<svg style="left:615px;top:551px" width="18" height="18"><path d="M8.40,9.30 L8.40,1.40 M8.40,4.40 L6.56,2.56 M8.40,4.40 L10.24,2.56 M8.40,9.30 L8.40,17.20 M8.40,14.20 L10.24,16.04 M8.40,14.20 L6.56,16.04 M8.40,9.30 L14.52,5.32 M12.01,6.96 L12.55,4.41 M12.01,6.96 L14.55,7.50 M8.40,9.30 L2.28,5.32 M4.79,6.96 L2.25,7.50 M4.79,6.96 L4.25,4.41 M8.40,9.30 L2.28,13.28 M4.79,11.64 L4.25,14.19 M4.79,11.64 L2.25,11.10 M8.40,9.30 L14.52,13.28 M12.01,11.64 L14.55,11.10 M12.01,11.64 L12.55,14.19" stroke="#1E6EFF" stroke-width="1.15" fill="none" stroke-linecap="round"/></svg>
<div class="a" style="left:713px;top:548px;width:98px;height:23px;box-sizing:border-box;border:1px solid #C9C7BA;border-radius:3px;background:#F5F4EA;"></div>
<div class="t" style="left:739.60px;top:550.19px;font-size:11px;color:#ACA899;letter-spacing:-0.070px;">Listen</div>
<svg style="left:719px;top:551px" width="18" height="18"><rect x="1.9" y="6" width="2.2" height="6" fill="#111"/><path d="M4.1,6 L9,1.2 H11.2 V16.6 H9 L4.1,12 Z" fill="#8a8a8a" stroke="#111" stroke-width="1"/><path d="M10.1,2.6 V15.2" stroke="#d8d8d8" stroke-width="1.4" stroke-dasharray="2,1"/><path d="M13,7 Q14.4,9.3 13,11.6 M14.6,4.2 Q16.8,9.5 14.6,14.9" fill="none" stroke="#111" stroke-width="1.1"/></svg>
<div class="btn" style="left:609px;top:575px;width:98px;height:23px;"></div>
<div class="t" style="left:635.40px;top:577.19px;font-size:11px;color:#000;letter-spacing:0.025px;">Print</div>
<svg style="left:615px;top:578px" width="18" height="18"><rect x="4.7" y="1.7" width="8.8" height="6.6" fill="#D8E2F4" stroke="#4A5670" stroke-width="1"/><rect x="5.4" y="3.2" width="7.4" height="1.5" fill="#B9C9EA"/><rect x="1.6" y="6.4" width="14.8" height="8.2" rx="2.8" fill="#F2F4F8" stroke="#3A4458" stroke-width="1"/><rect x="4.6" y="7.2" width="8.8" height="6" fill="#E2E8F4" stroke="#3A4458" stroke-width="0.9"/><rect x="5.5" y="10.5" width="5.5" height="1.2" fill="#8797B8"/><circle cx="12.3" cy="11.1" r="0.7" fill="#fff"/><rect x="4.6" y="13.4" width="8.8" height="2" rx="0.5" fill="#fff" stroke="#222" stroke-width="0.9"/></svg>
<div class="btn" style="left:713px;top:575px;width:98px;height:23px;"></div>
<div class="t" style="left:739.90px;top:577.19px;font-size:11px;color:#000;letter-spacing:-0.050px;">Settings</div>
<svg style="left:720px;top:579px" width="16" height="16"><polygon points="15.20,4.74 15.89,8.48 13.51,9.02 13.43,9.38 15.37,10.86 13.21,13.99 11.14,12.69 10.83,12.89 11.16,15.30 7.42,15.99 6.88,13.61 6.52,13.53 5.04,15.47 1.91,13.31 3.21,11.24 3.01,10.93 0.60,11.26 -0.09,7.52 2.29,6.98 2.37,6.62 0.43,5.14 2.59,2.01 4.66,3.31 4.97,3.11 4.64,0.70 8.38,0.01 8.92,2.39 9.28,2.47 10.76,0.53 13.89,2.69 12.59,4.76 12.79,5.07" fill="#7B9EE8" stroke="#3A4250" stroke-width="0.9" stroke-linejoin="miter"/><rect x="5.4" y="5.4" width="5" height="5" rx="0.8" fill="#FBFAF6" stroke="#3C63B8" stroke-width="1"/></svg>
<div class="btn" style="left:609px;top:603px;width:98px;height:23px;"></div>
<div class="t" style="left:636.40px;top:605.19px;font-size:11px;color:#000;transform:scaleX(0.9340);transform-origin:0 0;">View Map</div>
<svg style="left:616px;top:607px" width="16" height="16"><defs><linearGradient id="vm" x1="0" y1="0" x2="1" y2="1"><stop offset="0" stop-color="#0a3fd0"/><stop offset=".5" stop-color="#0b57e8"/><stop offset="1" stop-color="#1a8fd8"/></linearGradient></defs><rect x="0.6" y="0.6" width="13.6" height="13.6" fill="url(#vm)" stroke="#000" stroke-width="1.2"/><path d="M11,1.5 Q14.5,2 14,6 L12,5 Z" fill="#6f9a3a"/><path d="M3,1.3 L5.5,1.3 L4.5,3 Z" fill="#c8702a"/><path d="M7.4,1.5 V13.5 M1.5,7.4 H13.5" stroke="#fff" stroke-width="1.2"/><circle cx="7.4" cy="7.4" r="2.9" fill="none" stroke="#fff" stroke-width="1"/><circle cx="7.4" cy="7.5" r="1.3" fill="#7a8a2a"/></svg>
<div class="btn" style="left:713px;top:603px;width:98px;height:23px;"></div>
<div class="t" style="left:739.40px;top:605.19px;font-size:11px;color:#000;letter-spacing:-0.289px;">Disconnect</div>
<svg style="left:720px;top:608px" width="16" height="16"><circle cx="7.4" cy="7.4" r="6.9" fill="#EEEEEE" stroke="#000" stroke-width="1"/><rect x="5.1" y="4.9" width="4.9" height="5.1" fill="#800000"/></svg>
<div class="t" style="left:60.70px;top:597.49px;font-size:11px;color:#000;letter-spacing:0.037px;">RF Level:</div>
<div class="t" style="left:52.10px;top:610.69px;font-size:11px;color:#000;letter-spacing:-0.039px;">MPX Level:</div>
<div class="a" style="left:113px;top:602px;width:206px;height:11px;background:#000;"><div class="a" style="left:1px;top:1px;width:4px;height:9px;background:#ff0000;"></div><div class="a" style="left:6px;top:1px;width:4px;height:9px;background:#ff0000;"></div><div class="a" style="left:11px;top:1px;width:4px;height:9px;background:#ff0000;"></div><div class="a" style="left:16px;top:1px;width:4px;height:9px;background:#ff0000;"></div><div class="a" style="left:21px;top:1px;width:4px;height:9px;background:#ff0000;"></div><div class="a" style="left:26px;top:1px;width:4px;height:9px;background:#ff0000;"></div><div class="a" style="left:31px;top:1px;width:4px;height:9px;background:#ff0000;"></div><div class="a" style="left:36px;top:1px;width:4px;height:9px;background:#ff0000;"></div><div class="a" style="left:41px;top:1px;width:4px;height:9px;background:#ff0000;"></div><div class="a" style="left:46px;top:1px;width:4px;height:9px;background:#00ff00;"></div><div class="a" style="left:51px;top:1px;width:4px;height:9px;background:#00ff00;"></div><div class="a" style="left:56px;top:1px;width:4px;height:9px;background:#00ff00;"></div><div class="a" style="left:61px;top:1px;width:4px;height:9px;background:#00ff00;"></div><div class="a" style="left:66px;top:1px;width:4px;height:9px;background:#00ff00;"></div><div class="a" style="left:71px;top:1px;width:4px;height:9px;background:#00ff00;"></div><div class="a" style="left:76px;top:1px;width:4px;height:9px;background:#00ff00;"></div><div class="a" style="left:81px;top:1px;width:4px;height:9px;background:#00ff00;"></div><div class="a" style="left:86px;top:1px;width:4px;height:9px;background:#00ff00;"></div><div class="a" style="left:91px;top:1px;width:4px;height:9px;background:#00ff00;"></div><div class="a" style="left:96px;top:1px;width:4px;height:9px;background:#00ff00;"></div><div class="a" style="left:101px;top:1px;width:4px;height:9px;background:#00ff00;"></div><div class="a" style="left:106px;top:1px;width:4px;height:9px;background:#00ff00;"></div><div class="a" style="left:111px;top:1px;width:4px;height:9px;background:#00ff00;"></div><div class="a" style="left:116px;top:1px;width:4px;height:9px;background:#00ff00;"></div><div class="a" style="left:121px;top:1px;width:4px;height:9px;background:#00ff00;"></div><div class="a" style="left:126px;top:1px;width:4px;height:9px;background:#00ff00;"></div><div class="a" style="left:131px;top:1px;width:4px;height:9px;background:#00ff00;"></div><div class="a" style="left:136px;top:1px;width:4px;height:9px;background:#00ff00;"></div><div class="a" style="left:141px;top:1px;width:4px;height:9px;background:#00ff00;"></div><div class="a" style="left:146px;top:1px;width:4px;height:9px;background:#00ff00;"></div><div class="a" style="left:151px;top:1px;width:4px;height:9px;background:#00ff00;"></div><div class="a" style="left:156px;top:1px;width:4px;height:9px;background:#008000;"></div><div class="a" style="left:161px;top:1px;width:4px;height:9px;background:#008000;"></div><div class="a" style="left:166px;top:1px;width:4px;height:9px;background:#008000;"></div><div class="a" style="left:171px;top:1px;width:4px;height:9px;background:#008000;"></div><div class="a" style="left:176px;top:1px;width:4px;height:9px;background:#008000;"></div><div class="a" style="left:181px;top:1px;width:4px;height:9px;background:#008000;"></div><div class="a" style="left:186px;top:1px;width:4px;height:9px;background:#008000;"></div><div class="a" style="left:191px;top:1px;width:4px;height:9px;background:#008000;"></div><div class="a" style="left:196px;top:1px;width:4px;height:9px;background:#008000;"></div><div class="a" style="left:201px;top:1px;width:4px;height:9px;background:#008000;"></div></div>
<div class="a" style="left:113px;top:615px;width:206px;height:11px;background:#000;"><div class="a" style="left:1px;top:1px;width:4px;height:9px;background:#00ff00;"></div><div class="a" style="left:6px;top:1px;width:4px;height:9px;background:#00ff00;"></div><div class="a" style="left:11px;top:1px;width:4px;height:9px;background:#00ff00;"></div><div class="a" style="left:16px;top:1px;width:4px;height:9px;background:#00ff00;"></div><div class="a" style="left:21px;top:1px;width:4px;height:9px;background:#00ff00;"></div><div class="a" style="left:26px;top:1px;width:4px;height:9px;background:#00ff00;"></div><div class="a" style="left:31px;top:1px;width:4px;height:9px;background:#00ff00;"></div><div class="a" style="left:36px;top:1px;width:4px;height:9px;background:#00ff00;"></div><div class="a" style="left:41px;top:1px;width:4px;height:9px;background:#00ff00;"></div><div class="a" style="left:46px;top:1px;width:4px;height:9px;background:#00ff00;"></div><div class="a" style="left:51px;top:1px;width:4px;height:9px;background:#00ff00;"></div><div class="a" style="left:56px;top:1px;width:4px;height:9px;background:#00ff00;"></div><div class="a" style="left:61px;top:1px;width:4px;height:9px;background:#00ff00;"></div><div class="a" style="left:66px;top:1px;width:4px;height:9px;background:#00ff00;"></div><div class="a" style="left:71px;top:1px;width:4px;height:9px;background:#00ff00;"></div><div class="a" style="left:76px;top:1px;width:4px;height:9px;background:#00ff00;"></div><div class="a" style="left:81px;top:1px;width:4px;height:9px;background:#00ff00;"></div><div class="a" style="left:86px;top:1px;width:4px;height:9px;background:#00ff00;"></div><div class="a" style="left:91px;top:1px;width:4px;height:9px;background:#00ff00;"></div><div class="a" style="left:96px;top:1px;width:4px;height:9px;background:#00ff00;"></div><div class="a" style="left:101px;top:1px;width:4px;height:9px;background:#00ff00;"></div><div class="a" style="left:106px;top:1px;width:4px;height:9px;background:#00ff00;"></div><div class="a" style="left:111px;top:1px;width:4px;height:9px;background:#00ff00;"></div><div class="a" style="left:116px;top:1px;width:4px;height:9px;background:#00ff00;"></div><div class="a" style="left:121px;top:1px;width:4px;height:9px;background:#00ff00;"></div><div class="a" style="left:126px;top:1px;width:4px;height:9px;background:#00ff00;"></div><div class="a" style="left:131px;top:1px;width:4px;height:9px;background:#00ff00;"></div><div class="a" style="left:136px;top:1px;width:4px;height:9px;background:#00ff00;"></div><div class="a" style="left:141px;top:1px;width:4px;height:9px;background:#008000;"></div><div class="a" style="left:146px;top:1px;width:4px;height:9px;background:#008000;"></div><div class="a" style="left:151px;top:1px;width:4px;height:9px;background:#008000;"></div><div class="a" style="left:156px;top:1px;width:4px;height:9px;background:#008000;"></div><div class="a" style="left:161px;top:1px;width:4px;height:9px;background:#00ff00;"></div><div class="a" style="left:166px;top:1px;width:4px;height:9px;background:#008000;"></div><div class="a" style="left:171px;top:1px;width:4px;height:9px;background:#808000;"></div><div class="a" style="left:176px;top:1px;width:4px;height:9px;background:#808000;"></div><div class="a" style="left:181px;top:1px;width:4px;height:9px;background:#800000;"></div><div class="a" style="left:186px;top:1px;width:4px;height:9px;background:#800000;"></div><div class="a" style="left:191px;top:1px;width:4px;height:9px;background:#800000;"></div><div class="a" style="left:196px;top:1px;width:4px;height:9px;background:#800000;"></div><div class="a" style="left:201px;top:1px;width:4px;height:9px;background:#800000;"></div></div>
<div class="a" style="left:44px;top:632px;width:776px;height:23px;background:#fff;"></div>
<div class="a" style="left:45px;top:633px;width:774px;height:21px;background:#008000;"></div>
<div class="t" style="left:53.10px;top:634.19px;font-size:11px;color:#fff;font-weight:bold;letter-spacing:0.469px;">Connected to Demo Unit 1.</div>
</body></html>
